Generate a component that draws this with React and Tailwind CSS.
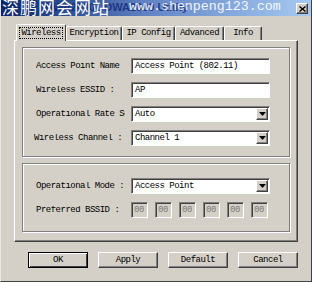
import React from 'react'

const raised = 'border border-t-white border-l-white border-r-[#404040] border-b-[#404040] shadow-[inset_-1px_-1px_0_#808080]'
const sunken = 'border border-t-[#808080] border-l-[#808080] border-r-white border-b-white shadow-[inset_1px_1px_0_#404040]'
const etched = 'border border-[#808080] shadow-[inset_1px_1px_0_#fff,1px_1px_0_#fff]'

function Label({ children }) {
  return (
    <div className="w-[89px] mr-[6px] overflow-hidden whitespace-nowrap text-black">{children}</div>
  )
}

function TextBox({ value }) {
  return (
    <div className={`w-[139px] h-[16px] bg-white flex items-center pl-[3px] ${sunken}`}>{value}</div>
  )
}

function Select({ value }) {
  return (
    <div className={`w-[139px] h-[16px] bg-white flex items-center pl-[3px] pr-[1px] ${sunken}`}>
      <span className="flex-1">{value}</span>
      <div className={`w-[12px] h-[12px] bg-[#d4d0c8] flex items-center justify-center ${raised}`}>
        <svg width="7" height="4" viewBox="0 0 7 4"><path d="M0 0h7L3.5 4z" fill="#000" /></svg>
      </div>
    </div>
  )
}

function Row({ label, children, left = 'pl-[13px]' }) {
  return (
    <div className={`flex items-center h-[16px] ${left}`}>
      <Label>{label}</Label>
      {children}
    </div>
  )
}

function Tab({ label, active, w }) {
  if (active) {
    return (
      <div className={`${w} h-[17px] -mb-[1px] relative z-10 bg-[#d4d0c8] border-t border-l border-t-white border-l-white border-r border-r-[#404040] rounded-t-[2px] flex items-center justify-center`}>
        <span className="border border-dotted border-black px-[1px] h-[12px] flex items-center">{label}</span>
      </div>
    )
  }
  return (
    <div className={`${w} h-[14px] border-t border-l border-t-white border-l-white border-r border-r-[#404040] shadow-[inset_-1px_0_0_#808080] rounded-t-[2px] flex items-center justify-center`}>
      {label}
    </div>
  )
}

function Btn({ label, def }) {
  return (
    <div className={`w-[60px] h-[16px] flex items-center justify-center text-black ${def ? 'border border-black shadow-[inset_1px_1px_0_#fff,inset_-1px_-1px_0_#404040]' : raised}`}>
      {label}
    </div>
  )
}

export default function App() {
  return (
    <div
      className="w-[312px] h-[282px] bg-[#d4d0c8] flex flex-col px-[2px] pb-[2px] border-x border-b border-l-[#e8e6e0] border-r-[#404040] border-b-[#404040] overflow-hidden text-[9px] tracking-[-0.5px] leading-none text-black"
      style={{ fontFamily: '"Liberation Mono", "Noto Sans CJK SC", monospace' }}
    >
      {/* title bar with watermark */}
      <div className="relative h-[16px] -mx-[2px] bg-gradient-to-r from-[#0a246a] via-[#6688c8] to-[#a6caf0] overflow-hidden">
        <span className="absolute left-[44px] top-[2px] text-[11px] font-bold text-[#12287a]/80 tracking-[0px] whitespace-nowrap" style={{ fontFamily: '"Liberation Sans", sans-serif' }}>
          DWA2000 , DWA2000 Utility
        </span>
        <span className="absolute left-[1px] -top-[2px] text-[17px] text-white tracking-[1px] whitespace-nowrap" style={{ fontFamily: '"Noto Sans CJK SC", sans-serif' }}>
          深鹏网会网站
        </span>
        <span className="absolute left-[128px] top-[0px] text-[13.3px] text-white/90 tracking-[0px] whitespace-nowrap">
          www.shenpeng123.com
        </span>
        <div className={`absolute right-[3px] top-[3px] w-[12px] h-[11px] bg-[#d4d0c8] flex items-center justify-center ${raised}`}>
          <svg width="7" height="6" viewBox="0 0 7 6"><path d="M0.5 0.5L6.5 5.5M6.5 0.5L0.5 5.5" stroke="#000" strokeWidth="1.4" /></svg>
        </div>
      </div>

      <div className="ml-[11px] w-[284px] mt-[8px] flex flex-col">
        {/* tabs */}
        <div className="h-[16px] flex items-end pl-[2px]">
          <Tab label="Wireless" active w="w-[50px]" />
          <Tab label="Encryption" w="w-[56px]" />
          <Tab label="IP Config" w="w-[53px]" />
          <Tab label="Advanced" w="w-[49px]" />
          <Tab label="Info" w="w-[38px]" />
        </div>

        {/* panel */}
        <div className={`h-[202px] pt-[6px] px-[7px] flex flex-col gap-[6px] ${raised}`}>
          <div className={`h-[110px] pt-[10px] flex flex-col gap-[8px] ${etched}`}>
            <Row label="Access Point Name">
              <TextBox value="Access Point (802.11)" />
            </Row>
            <Row label="Wireless ESSID :">
              <TextBox value="AP" />
            </Row>
            <Row label="Operational Rate Set :">
              <Select value="Auto" />
            </Row>
            <Row label="Wireless Channel :" left="pl-[11px]">
              <div className="w-[2px]" />
              <Select value="Channel 1" />
            </Row>
          </div>

          <div className={`h-[69px] pt-[14px] flex flex-col gap-[8px] ${etched}`}>
            <Row label="Operational Mode :">
              <Select value="Access Point" />
            </Row>
            <Row label="Preferred BSSID :">
              <div className="flex gap-[7px]">
                {['00', '00', '00', '00', '00', '00'].map((v, i) => (
                  <div key={i} className={`w-[17px] h-[16px] flex items-center pl-[2px] text-[#7a7a7a] ${sunken}`}>{v}</div>
                ))}
              </div>
            </Row>
          </div>
        </div>

        {/* buttons */}
        <div className="mt-[10px] pl-[14px] flex gap-[10px]">
          <Btn label="OK" def />
          <Btn label="Apply" />
          <Btn label="Default" />
          <Btn label="Cancel" />
        </div>
      </div>
    </div>
  )
}
